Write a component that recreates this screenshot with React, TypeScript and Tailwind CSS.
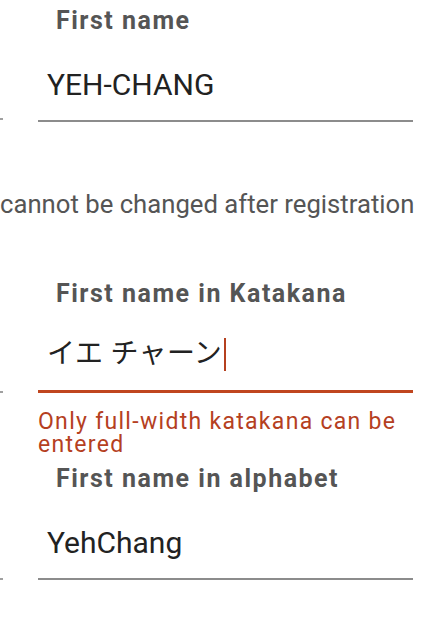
import React from "react";

const font = { fontFamily: "Roboto, 'Noto Sans CJK JP', sans-serif" };

const labelCls =
  "pl-[18px] text-[25px] leading-[28px] font-bold text-[#555555] tracking-[1.5px] whitespace-nowrap";

export default function App() {
  return (
    <div className="w-[435px] h-[624px] overflow-hidden bg-white" style={font}>
      {/* First name */}
      <div className="flex">
        <div className="w-[3px] shrink-0 flex flex-col justify-end pb-[2px]">
          <div className="h-[2px] bg-[#a0a0a0]" />
        </div>
        <div className="ml-[35px] w-[375px] pt-[7px]">
          <div className={labelCls}>First name</div>
          <div className="mt-[32px] pl-[9px] text-[30px] leading-[36px] text-[#222222]">
            YEH-CHANG
          </div>
          <div className="mt-[17px] h-[2px] bg-[#8c8c8c]" />
        </div>
      </div>

      {/* Hint */}
      <div className="mt-[68px] w-[413px] text-right whitespace-nowrap text-[25.7px] leading-[28px] text-[#555555]">
        cannot be changed after registration
      </div>

      {/* First name in Katakana */}
      <div className="flex mt-[62px]">
        <div className="w-[3px] shrink-0 flex flex-col justify-end pb-[63px]">
          <div className="h-[2px] bg-[#a0a0a0]" />
        </div>
        <div className="ml-[35px] w-[375px]">
          <div className={labelCls}>First name in Katakana</div>
          <div className="mt-[28px] pl-[9px] flex items-center h-[36px] text-[28px] text-[#222222]">
            <span className="leading-[36px] tracking-[0.3px]">イエ チャーン</span>
            <span className="ml-[2px] inline-block w-[2px] h-[33px] bg-[#b5401f]" />
          </div>
          <div className="mt-[18px] h-[3px] bg-[#c0461f]" />
          <div className="mt-[17px] text-[23px] leading-[23px] tracking-[1.3px] text-[#b5401f]">
            Only full-width katakana can be entered
          </div>
        </div>
      </div>

      {/* First name in alphabet */}
      <div className="flex mt-[9px]">
        <div className="w-[3px] shrink-0 flex flex-col justify-end">
          <div className="h-[2px] bg-[#a0a0a0]" />
        </div>
        <div className="ml-[35px] w-[375px]">
          <div className={labelCls}>First name in alphabet</div>
          <div className="mt-[32px] pl-[9px] text-[30px] leading-[36px] text-[#222222]">
            YehChang
          </div>
          <div className="mt-[17px] h-[2px] bg-[#8c8c8c]" />
        </div>
      </div>
    </div>
  );
}
